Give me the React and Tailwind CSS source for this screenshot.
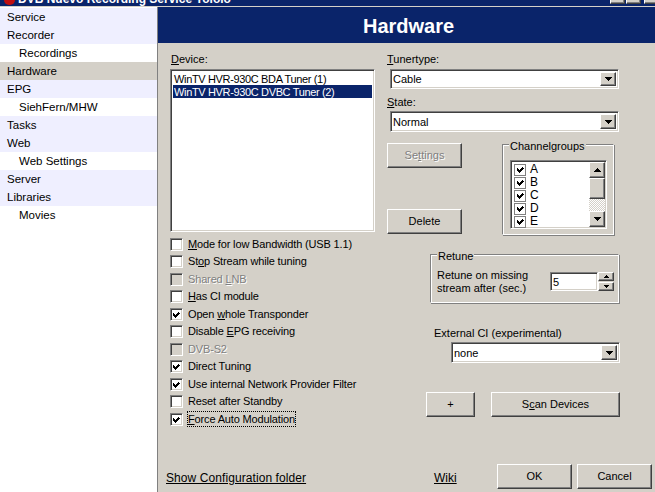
import React from "react";

const sunken = "border border-[#808080] border-r-white border-b-white shadow-[inset_1px_1px_0_#404040,inset_-1px_-1px_0_#d4d0c8]";
const raised = "border border-white border-r-[#404040] border-b-[#404040] bg-[#d4d0c8] shadow-[inset_-1px_-1px_0_#808080]";

const NAV = [
  { label: "Service", kind: "top" },
  { label: "Recorder", kind: "top" },
  { label: "Recordings", kind: "sub" },
  { label: "Hardware", kind: "active" },
  { label: "EPG", kind: "top" },
  { label: "SiehFern/MHW", kind: "sub" },
  { label: "Tasks", kind: "top" },
  { label: "Web", kind: "top" },
  { label: "Web Settings", kind: "sub" },
  { label: "Server", kind: "top" },
  { label: "Libraries", kind: "top" },
  { label: "Movies", kind: "sub" },
];

const OPTIONS = [
  { y: 244, before: "", key: "M", after: "ode for low Bandwidth (USB 1.1)" },
  { y: 261, before: "St", key: "o", after: "p Stream while tuning" },
  { y: 279, before: "Shared ", key: "L", after: "NB", disabled: true },
  { y: 296, before: "", key: "H", after: "as CI module" },
  { y: 314, before: "Open ", key: "w", after: "hole Transponder", checked: true },
  { y: 331, before: "Disable ", key: "E", after: "PG receiving" },
  { y: 349, before: "DVB-S2", key: "", after: "", disabled: true },
  { y: 366, before: "Direct Tuning", key: "", after: "", checked: true },
  { y: 384, before: "Use internal Network Provider Filter", key: "", after: "", checked: true },
  { y: 401, before: "Reset after Standby", key: "", after: "" },
  { y: 419, before: "", key: "F", after: "orce Auto Modulation", checked: true, focused: true },
];

function Check() {
  return (
    <svg width="11" height="11" viewBox="0 0 11 11" shapeRendering="crispEdges" className="shrink-0">
      <path d="M2 4h1v1h1v1h1V5h1V4h1V3h1v1h1v1h-1v1h-1v1h-1v1h-1v1h-1V8H3V7H2z" fill="#000" />
    </svg>
  );
}

function Box({ checked, disabled }) {
  return (
    <span className={`flex h-[13px] w-[13px] items-center justify-center ${sunken} ${disabled ? "bg-[#d4d0c8]" : "bg-white"}`}>
      {checked && <Check />}
    </span>
  );
}

function Arrow({ up, size = "lg" }) {
  const w = size === "lg" ? 7 : 5;
  const h = size === "lg" ? 4 : 3;
  return (
    <svg width={w} height={h} viewBox={`0 0 ${w} ${h}`} shapeRendering="crispEdges">
      <path d={up ? `M${w / 2} 0L${w} ${h}H0z` : `M0 0H${w}L${w / 2} ${h}z`} fill="#000" />
    </svg>
  );
}

function Combo({ value, className }) {
  return (
    <div className={`absolute flex items-center bg-white pl-[2px] ${sunken} ${className}`}>
      <span>{value}</span>
      <span className={`absolute top-[2px] right-[2px] bottom-[2px] flex w-[16px] items-center justify-center ${raised}`}>
        <Arrow />
      </span>
    </div>
  );
}

function Btn({ className, children, disabled }) {
  return (
    <div className={`absolute flex items-center justify-center pb-px ${raised} ${disabled ? "text-[#808080] [text-shadow:1px_1px_0_#fff]" : ""} ${className}`}>
      {children}
    </div>
  );
}

function Group({ className, title }) {
  return (
    <div className={`absolute border border-[#808080] border-r-white border-b-white shadow-[1px_1px_0_#808080,inset_1px_1px_0_#fff] ${className}`}>
      <span className="absolute top-[-5px] left-[6px] bg-[#d4d0c8] px-px leading-[13px]">{title}</span>
    </div>
  );
}

export default function App() {
  return (
    <div className="relative h-[492px] w-[655px] overflow-hidden bg-[#d4d0c8] font-[Liberation_Sans,sans-serif] text-[11px] leading-[14px] text-black">
      {/* Titelleiste, oben abgeschnitten */}
      <div className="absolute top-0 left-0 h-[6px] w-full overflow-hidden bg-[#0a246a]">
        <div className="absolute top-[-5px] left-[4px] h-[10px] w-[11px] rounded-full bg-[#c01010]" />
        <div className="absolute top-[-8px] left-[18px] whitespace-nowrap text-[12px] font-bold text-white">
          DVB Nuevo Recording Service Yololo
        </div>
        <div className={`absolute top-[-14px] left-[610px] h-[18px] w-[15px] ${raised}`} />
        <div className={`absolute top-[-14px] left-[626px] h-[18px] w-[15px] ${raised}`} />
        <div className={`absolute top-[-14px] left-[644px] h-[18px] w-[15px] ${raised}`} />
      </div>
      <div className="absolute top-[6px] left-0 h-px w-full bg-[#d4d0c8]" />

      {/* Navigation */}
      <div className="absolute top-[7px] left-0 h-[485px] w-[157px] bg-white pt-px text-[11.5px]">
        {NAV.map((n) => (
          <div
            key={n.label}
            className={`flex h-[18px] items-center ${n.kind === "sub" ? "bg-white pl-[19px]" : "pl-[7px]"} ${n.kind === "top" ? "bg-[#efefff]" : ""} ${n.kind === "active" ? "bg-[#d4d0c8]" : ""}`}
          >
            {n.label}
          </div>
        ))}
      </div>
      <div className="absolute top-[7px] left-[157px] h-[485px] w-px bg-[#808080]" />

      {/* Kopf */}
      <div className="absolute top-[7px] left-[158px] h-[36px] w-[497px] bg-[#0a246a]">
        <span className="absolute top-[8px] left-[205px] text-[20px] font-bold leading-[22px] text-white">Hardware</span>
      </div>

      {/* Device */}
      <div className="absolute top-[52px] left-[171px]"><u>D</u>evice:</div>
      <div className={`absolute top-[69px] left-[170px] h-[163px] w-[205px] bg-white p-[2px] tracking-[-0.35px] ${sunken}`}>
        <div className="flex h-[13px] items-center whitespace-nowrap pl-[1px]">WinTV HVR-930C BDA Tuner (1)</div>
        <div className="flex h-[13px] items-center whitespace-nowrap bg-[#0a246a] pl-[1px] text-white">WinTV HVR-930C DVBC Tuner (2)</div>
      </div>

      {/* Optionen */}
      {OPTIONS.map((o) => (
        <div key={o.y} className="absolute left-[170px] flex h-[13px] items-center" style={{ top: o.y - 6 }}>
          <Box checked={o.checked} disabled={o.disabled} />
          <span
            className={`relative top-[-1px] ml-[5px] whitespace-nowrap tracking-[-0.15px] ${o.disabled ? "text-[#808080] [text-shadow:1px_1px_0_#fff]" : ""} ${o.focused ? "outline-1 outline-dotted outline-black" : ""}`}
          >
            {o.before}
            {o.key && <u>{o.key}</u>}
            {o.after}
          </span>
        </div>
      ))}

      <div className="absolute top-[471px] left-[166px] text-[12px] tracking-[0.08px] underline">Show Configuration folder</div>
      <div className="absolute top-[471px] left-[434px] text-[12px] underline">Wiki</div>

      {/* Rechte Spalte */}
      <div className="absolute top-[52px] left-[387px]"><u>T</u>unertype:</div>
      <Combo value="Cable" className="top-[69px] left-[390px] h-[20px] w-[229px]" />
      <div className="absolute top-[95px] left-[387px]"><u>S</u>tate:</div>
      <Combo value="Normal" className="top-[111px] left-[390px] h-[21px] w-[229px]" />

      <Btn disabled className="top-[143px] left-[387px] h-[25px] w-[75px]">Se<u>t</u>tings</Btn>
      <Btn className="top-[209px] left-[387px] h-[25px] w-[75px]">Delete</Btn>

      {/* Channelgroups */}
      <Group className="top-[144px] left-[502px] h-[91px] w-[112px]" title="Channelgroups" />
      <div className={`absolute top-[160px] left-[510px] h-[69px] w-[97px] bg-white ${sunken}`}>
        {["A", "B", "C", "D", "E"].map((c, i) => (
          <div key={c} className="absolute left-[3px] flex h-[13px] items-center" style={{ top: 2 + i * 13 }}>
            <span className="flex h-[12px] w-[12px] items-center justify-center border border-[#808080]"><Check /></span>
            <span className="ml-[4px] text-[12px] leading-[13px]">{c}</span>
          </div>
        ))}
        <div className={`absolute top-[1px] left-[78px] flex h-[16px] w-[16px] items-center justify-center ${raised}`}><Arrow up /></div>
        <div className={`absolute top-[17px] left-[78px] h-[21px] w-[16px] ${raised}`} />
        <div className="absolute top-[38px] left-[78px] h-[12px] w-[16px] bg-[repeating-conic-gradient(#d4d0c8_0_25%,#fff_0_50%)] bg-[length:2px_2px]" />
        <div className={`absolute top-[50px] left-[78px] flex h-[16px] w-[16px] items-center justify-center ${raised}`}><Arrow /></div>
      </div>

      {/* Retune */}
      <Group className="top-[254px] left-[430px] h-[49px] w-[189px]" title="Retune" />
      <div className="absolute top-[268px] left-[437px]">Retune on missing</div>
      <div className="absolute top-[281px] left-[437px]">stream after (sec.)</div>
      <div className={`absolute top-[272px] left-[550px] flex h-[19px] w-[48px] items-center bg-white pl-[2px] ${sunken}`}>5</div>
      <div className={`absolute top-[272px] left-[598px] flex h-[9px] w-[16px] items-center justify-center ${raised}`}><Arrow up size="sm" /></div>
      <div className={`absolute top-[282px] left-[598px] flex h-[9px] w-[16px] items-center justify-center ${raised}`}><Arrow size="sm" /></div>

      <div className="absolute top-[326px] left-[434px]">External CI (experimental)</div>
      <Combo value="none" className="top-[342px] left-[451px] h-[21px] w-[169px]" />

      <Btn className="top-[392px] left-[426px] h-[25px] w-[49px]">+</Btn>
      <Btn className="top-[392px] left-[491px] h-[25px] w-[129px]">S<u>c</u>an Devices</Btn>
      <Btn className="top-[464px] left-[497px] h-[25px] w-[75px]">OK</Btn>
      <Btn className="top-[464px] left-[577px] h-[25px] w-[75px]">Cancel</Btn>
    </div>
  );
}
